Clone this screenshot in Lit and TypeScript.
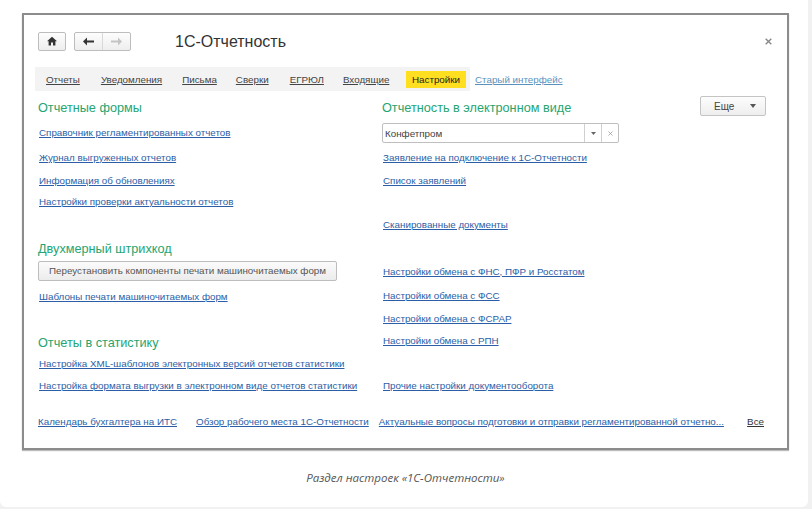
import { LitElement, html, css } from "lit";
import { customElement } from "lit/decorators.js";

type Item = { t: string; y: number; k?: "h" | "a" | "b" | "i" };
const left: Item[] = [
  { t: "Отчетные формы", y: 109, k: "h" },
  { t: "Справочник регламентированных отчетов", y: 133 },
  { t: "Журнал выгруженных отчетов", y: 158 },
  { t: "Информация об обновлениях", y: 181 },
  { t: "Настройки проверки актуальности отчетов", y: 202 },
  { t: "Двухмерный штрихкод", y: 250, k: "h" },
  { t: "Переустановить компоненты печати машиночитаемых форм", y: 272, k: "b" },
  { t: "Шаблоны печати машиночитаемых форм", y: 297 },
  { t: "Отчеты в статистику", y: 344, k: "h" },
  { t: "Настройка XML-шаблонов электронных версий отчетов статистики", y: 364 },
  { t: "Настройка формата выгрузки в электронном виде отчетов статистики", y: 386 },
];
const right: Item[] = [
  { t: "Заявление на подключение к 1С-Отчетности", y: 158 },
  { t: "Список заявлений", y: 181 },
  { t: "Сканированные документы", y: 225 },
  { t: "Настройки обмена с ФНС, ПФР и Росстатом", y: 272 },
  { t: "Настройки обмена с ФСС", y: 296 },
  { t: "Настройки обмена с ФСРАР", y: 319 },
  { t: "Настройки обмена с РПН", y: 341 },
  { t: "Прочие настройки документооборота", y: 386 },
];
const tabs: [string, number][] = [
  ["Отчеты", 21], ["Уведомления", 20], ["Письма", 19], ["Сверки", 21], ["ЕГРЮЛ", 19], ["Входящие", 14],
];

@customElement("app-root")
export class AppRoot extends LitElement {
  static styles = css`
    :host { display: block; width: 812px; height: 509px; background: #f1f1f1; overflow: hidden; font-family: "Liberation Sans", Arial, sans-serif; }
    .card { box-sizing: border-box; width: 808px; height: 507px; background: #fff; border-radius: 0 0 6px 6px; padding: 13px 20px 0 22px; }
    .shot { box-sizing: border-box; width: 767px; height: 437px; background: #fff; border: 2px solid #8c8c8c; padding: 0; box-shadow: 0 1px 1px #bbb; }
    .top { display: flex; align-items: center; height: 52px; padding: 0 0 0 14px; box-sizing: border-box; }
    .btn { box-sizing: border-box; display: flex; align-items: center; justify-content: center; height: 19px; border: 1px solid #bdbdbd; border-radius: 2px; background: linear-gradient(#fdfdfd, #eeeeee); }
    .home { width: 28px; margin-right: 8px; }
    .nav { width: 57px; }
    .nav span { flex: 1; display: flex; justify-content: center; align-items: center; height: 100%; }
    .nav span + span { border-left: 1px solid #d8d8d8; }
    .title { font-size: 16px; color: #333; margin-left: 44px; padding-top: 1px; }
    .close { margin-left: auto; margin-right: 15px; display: flex; }
    .tabs { display: flex; align-items: center; height: 24px; margin: 0 0 0 11px; }
    .tabbar { display: flex; flex: none; align-items: center; height: 24px; background: #f3f3f3; padding: 0 4px 0 11px; width: 435px; box-sizing: border-box; }
    .tab { font-size: 9.8px; color: #444; text-decoration: underline; white-space: nowrap; }
    .tab.on { background: #ffdf1f; color: #222; text-decoration: none; height: 17px; line-height: 17px; width: 60px; flex: none; text-align: center; margin-left: auto; }
    .old { font-size: 9.8px; color: #5a92bd; text-decoration: underline; margin-left: 5px; white-space: nowrap; }
    .cols { display: grid; grid-template-columns: 344px 1fr; padding-left: 14px; margin-top: 5px; }
    .col { display: flex; flex-direction: column; }
    .row { display: flex; align-items: center; height: 20px; }
    .a { font-size: 9.8px; color: #2b5ea6; text-decoration: underline; white-space: nowrap; padding-left: 1px; }
    .h { font-size: 12.7px; color: #25a572; white-space: nowrap; }
    .push { box-sizing: border-box; width: 299px; height: 20px; border: 1px solid #bdbdbd; border-radius: 2px; background: linear-gradient(#fbfbfb, #ececec); font-size: 9.8px; color: #555; text-align: center; line-height: 18px; }
    .headrow { display: flex; justify-content: space-between; align-items: center; padding-right: 21px; }
    .headrow .h { padding-top: 3px; }
    .more { box-sizing: border-box; width: 66px; height: 20px; border: 1px solid #c4c4c4; border-radius: 2px; background: linear-gradient(#fdfdfd, #eeeeee); font-size: 10px; color: #444; display: flex; align-items: center; padding-left: 13px; gap: 16px; }
    .input { box-sizing: border-box; display: flex; width: 237px; height: 20px; border: 1px solid #bfbfbf; border-radius: 2px; margin-top: 7px; font-size: 9.8px; color: #444; align-items: center; }
    .input .v { flex: 1; padding-left: 2px; }
    .input .s { width: 16px; height: 100%; border-left: 1px solid #d0d0d0; display: flex; align-items: center; justify-content: center; }
    .foot { display: flex; align-items: center; padding: 0 23px 0 14px; font-size: 9.8px; margin-top: 21px; }
    .foot a { color: #2b5ea6; text-decoration: underline; white-space: nowrap; }
    .foot a.b { margin-left: 19px; }
    .foot a.c { margin-left: 10px; }
    .foot a.all { color: #333; margin-left: auto; }
    .cap { font-family: "Open Sans", sans-serif; font-style: italic; font-size: 11.5px; color: #555; text-align: center; margin-top: 20px; width: 767px; }
  `;

  private col(items: Item[], start: number) {
    let y = start;
    return items.map((it) => {
      const gap = it.y - 10 - y;
      y = it.y + 10;
      const cls = it.k ?? "a";
      return html`<div class="row" style="margin-top:${gap}px">
        ${it.k === "b" ? html`<div class="push">${it.t}</div>` : html`<span class=${cls}>${it.t}</span>`}
      </div>`;
    });
  }

  render() {
    return html`<div class="card"><div class="shot">
      <div class="top">
        <div class="btn home"><svg width="10" height="10" viewBox="0 0 10 10"><path d="M5 .8 0 5.2h1.6V9.6h2.4V6.4h2V9.6h2.4V5.2H10Z" fill="#333"/></svg></div>
        <div class="btn nav">
          <span><svg width="11" height="9" viewBox="0 0 11 9"><path d="M0 4.5 4 .5v3h7v2H4v3Z" fill="#333"/></svg></span>
          <span><svg width="11" height="9" viewBox="0 0 11 9"><path d="M11 4.5 7 .5v3H0v2h7v3Z" fill="#c4c4c4"/></svg></span>
        </div>
        <div class="title">1С-Отчетность</div>
        <div class="close"><svg width="7" height="7" viewBox="0 0 7 7"><path d="M.7.7l5.6 5.6M6.3.7.7 6.3" stroke="#888" stroke-width="1.4"/></svg></div>
      </div>
      <div class="tabs">
        <div class="tabbar">
          ${tabs.map(([t, m]) => html`<span class="tab" style="margin-right:${m}px">${t}</span>`)}
          <span class="tab on">Настройки</span>
        </div>
        <span class="old">Старый интерфейс</span>
      </div>
      <div class="cols">
        <div class="col">${this.col(left, 97)}</div>
        <div class="col">
          <div class="headrow"><span class="h">Отчетность в электронном виде</span><span class="more">Еще <svg width="6" height="4" viewBox="0 0 6 4"><path d="M0 0h6L3 4Z" fill="#555"/></svg></span></div>
          <div class="input"><span class="v">Конфетпром</span>
            <span class="s"><svg width="5" height="3" viewBox="0 0 5 3"><path d="M0 0h5L2.5 3Z" fill="#666"/></svg></span>
            <span class="s"><svg width="5" height="5" viewBox="0 0 5 5"><path d="M.5.5l4 4M4.5.5l-4 4" stroke="#999" stroke-width=".8"/></svg></span>
          </div>
          ${this.col(right, 144)}
        </div>
      </div>
      <div class="foot">
        <a>Календарь бухгалтера на ИТС</a>
        <a class="b">Обзор рабочего места 1С-Отчетности</a>
        <a class="c">Актуальные вопросы подготовки и отправки регламентированной отчетно...</a>
        <a class="all">Все</a>
      </div>
    </div>
    <div class="cap">Раздел настроек «1С-Отчетности»</div>
    </div>`;
  }
}
